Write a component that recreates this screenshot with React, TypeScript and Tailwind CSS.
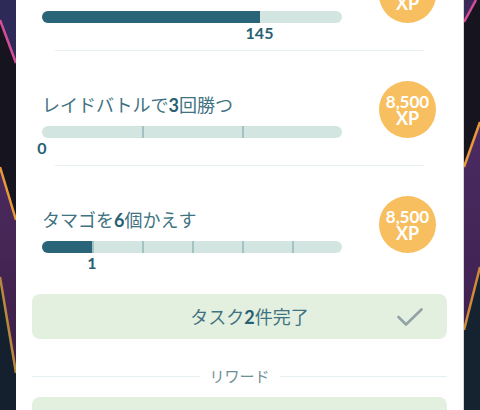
import React from "react";

type Item = {
  title: React.ReactNode;
  value: number;
  max: number;
  segments: number;
};

const items: Item[] = [
  {
    title: (
      <>
        ポケモンを<b className="font-bold text-[#285f73]">10</b>匹捕まえる
      </>
    ),
    value: 145,
    max: 200,
    segments: 1,
  },
  {
    title: (
      <>
        レイドバトルで<b className="font-bold text-[#285f73]">3</b>回勝つ
      </>
    ),
    value: 0,
    max: 3,
    segments: 3,
  },
  {
    title: (
      <>
        タマゴを<b className="font-bold text-[#285f73]">6</b>個かえす
      </>
    ),
    value: 1,
    max: 6,
    segments: 6,
  },
];

function Background() {
  return (
    <svg
      className="absolute inset-0"
      width={480}
      height={410}
      viewBox="0 0 480 410"
    >
      <defs>
        <linearGradient id="purpL" x1="0" y1="0" x2="0" y2="1">
          <stop offset="0" stopColor="#4a2a5e" />
          <stop offset="1" stopColor="#3d1f45" />
        </linearGradient>
        <linearGradient id="purpR" x1="0" y1="0" x2="0" y2="1">
          <stop offset="0" stopColor="#4b2b62" />
          <stop offset="1" stopColor="#3f2150" />
        </linearGradient>
      </defs>
      <rect x={0} y={0} width={16} height={410} fill="#15141f" />
      <polygon points="0,0 16,0 16,63 0,20" fill="#2e2a58" />
      <polygon points="0,167 16,220 16,373 0,277" fill="url(#purpL)" />
      <polygon points="0,277 16,373 16,410 0,410" fill="#14202d" />
      <line x1={0} y1={20} x2={16} y2={63} stroke="#d64d98" strokeWidth={2.5} />
      <line x1={0} y1={167} x2={16} y2={220} stroke="#e89a3a" strokeWidth={2.5} />
      <line x1={0} y1={277} x2={16} y2={373} stroke="#b98a3e" strokeWidth={2.5} />
      <rect x={464} y={0} width={16} height={410} fill="#16141f" />
      <polygon points="464,0 475,0 464,22" fill="#3a2a5a" />
      <polygon points="464,167 480,122 480,267 464,330" fill="url(#purpR)" />
      <polygon points="464,330 480,267 480,410 464,410" fill="#152230" />
      <line x1={464} y1={22} x2={476} y2={0} stroke="#d64d98" strokeWidth={2.5} />
      <line x1={464} y1={167} x2={480} y2={122} stroke="#e89a3a" strokeWidth={2.5} />
      <line x1={464} y1={330} x2={480} y2={267} stroke="#d08a3a" strokeWidth={2.5} />
    </svg>
  );
}

function ProgressBar({ value, max, segments }: { value: number; max: number; segments: number }) {
  const w = 300;
  const fill = (value / max) * w;
  return (
    <div>
      <div className="relative mt-[9px] flex h-[12px] w-[300px] overflow-hidden rounded-full bg-[#d3e5e0]">
        {Array.from({ length: segments }).map((_, i) => (
          <div key={i} className="flex flex-1">
            {i > 0 && <div className="h-full w-[2px] bg-[#a3c3c2]" />}
          </div>
        ))}
        {fill > 0 && (
          <div
            className="absolute left-0 top-0 h-full bg-[#2a6478]"
            style={{ width: `${fill}px` }}
          />
        )}
      </div>
      <div className="relative h-[20px] w-[300px]">
        <span
          className="absolute top-0 -translate-x-1/2 text-[16px] font-bold leading-[20px] text-[#285f73]"
          style={{ left: `${Math.max(fill, 0)}px` }}
        >
          {value}
        </span>
      </div>
    </div>
  );
}

function XPBadge() {
  return (
    <div className="ml-auto mt-[30px] flex h-[57px] w-[57px] flex-col items-center justify-center rounded-full bg-[#f7bf5f] font-bold text-white">
      <span className="h-[16px] text-[17px] leading-[16px]">8,500</span>
      <span className="h-[16px] text-[18px] leading-[16px]">XP</span>
    </div>
  );
}

export default function App() {
  return (
    <div className="relative h-[410px] w-[480px] overflow-hidden font-[Lato,'Noto_Sans_CJK_JP',sans-serif]">
      <Background />
      <div className="relative mx-[16px] h-[410px] overflow-hidden border-r border-[#d6d6d6] bg-white">
        <div className="-mt-[65px]">
          {items.map((it, idx) => (
            <div key={idx} className="flex h-[115px] flex-col">
              <div className={`mx-[39px] h-px ${idx === 0 ? "bg-transparent" : "bg-[#e3eff0]"}`} />
              <div className="flex pl-[26px] pr-[27px]">
                <div className="w-[300px] pt-[42px]">
                  <div className="h-[24px] whitespace-nowrap text-[18px] leading-[24px] text-[#3f7282]">
                    {it.title}
                  </div>
                  <ProgressBar value={it.value} max={it.max} segments={it.segments} />
                </div>
                <XPBadge />
              </div>
            </div>
          ))}
        </div>
        <div className="mx-[16px] mt-[14px] flex h-[45px] items-center rounded-[8px] bg-[#e4f0df]">
          <div className="flex-1 pl-[70px] text-center text-[18px] leading-[24px] text-[#3f7282]">
            タスク<b className="font-bold text-[#285f73]">2</b>件完了
          </div>
          <svg width={26} height={18} viewBox="0 0 26 18" className="mr-[24px]">
            <polyline
              points="1.5,9 9,16.5 24.5,1.5"
              fill="none"
              stroke="#91a3a6"
              strokeWidth={2.6}
              strokeLinecap="round"
              strokeLinejoin="round"
            />
          </svg>
        </div>
        <div className="mx-[16px] mt-[27px] flex h-[20px] items-center gap-[10px]">
          <div className="h-px flex-1 bg-[#e3eff0]" />
          <span className="text-[15px] leading-[20px] text-[#6d8f96]">リワード</span>
          <div className="h-px flex-1 bg-[#e3eff0]" />
        </div>
        <div className="mx-[16px] mt-[11px] h-[60px] rounded-[8px] bg-[#e4f0df]" />
      </div>
    </div>
  );
}
